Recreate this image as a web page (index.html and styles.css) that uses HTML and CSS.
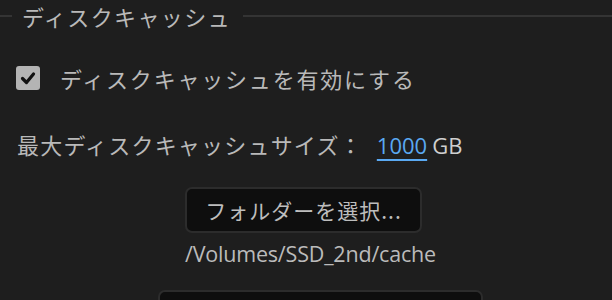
FILE: index.html
```html
<!DOCTYPE html>
<html lang="ja">
<head>
<meta charset="utf-8">
<link rel="stylesheet" href="styles.css">
</head>
<body>
<div class="panel">
  <div class="legend">
    <span class="rule rule-short"></span>
    <span class="legend-text">ディスクキャッシュ</span>
    <span class="rule rule-long"></span>
  </div>
  <label class="check-row">
    <span class="checkbox">
      <svg viewBox="0 0 24 24" width="24" height="24"><path d="M6.5 12.5 L10.5 16.5 L17.5 8" fill="none" stroke="#111" stroke-width="3.2" stroke-linecap="round" stroke-linejoin="round"/></svg>
    </span>
    <span class="check-label">ディスクキャッシュを有効にする</span>
  </label>
  <div class="size-row">
    <span class="size-label">最大ディスクキャッシュサイズ：</span>
    <span class="size-value">1000</span>
    <span class="size-unit">GB</span>
  </div>
  <div class="folder">
    <button class="btn">フォルダーを選択...</button>
    <div class="path">/Volumes/SSD_2nd/cache</div>
  </div>
  <div class="next">
    <button class="btn btn-wide"></button>
  </div>
</div>
</body>
</html>
```
FILE: styles.css
```css
html, body {
  margin: 0;
  padding: 0;
  background: #1e1e1e;
  overflow: hidden;
}
body {
  width: 612px;
  height: 300px;
  font-family: "Noto Sans CJK JP", "Noto Sans", sans-serif;
  color: #b9b9b9;
  font-size: 22px;
}
.panel {
  display: flex;
  flex-direction: column;
}
.legend {
  display: flex;
  align-items: center;
  height: 32px;
}
.rule {
  height: 2px;
  background: #343434;
}
.rule-short { width: 12px; }
.rule-long { flex: 1; }
.legend-text {
  padding: 0 12px 0 10px;
  letter-spacing: 1.4px;
  line-height: 30px;
}
.check-row {
  display: flex;
  align-items: center;
  gap: 20px;
  padding-left: 16px;
  margin-top: 34px;
  height: 24px;
}
.checkbox {
  width: 24px;
  height: 24px;
  border-radius: 3px;
  background: #b4b4b4;
  display: flex;
}
.check-label {
  letter-spacing: 1.8px;
  line-height: 24px;
}
.size-row {
  display: flex;
  align-items: baseline;
  padding-left: 17px;
  margin-top: 30px;
  height: 48px;
  line-height: 48px;
}
.size-label {
  letter-spacing: 1.2px;
}
.size-value {
  margin-left: 14px;
  color: #5aa9f2;
  text-decoration: underline;
  text-decoration-thickness: 2px;
  text-underline-offset: 5px;
  font-family: "Open Sans", sans-serif;
}
.size-unit {
  margin-left: 5px;
  color: #cfcfcf;
  font-family: "Open Sans", sans-serif;
}
.folder {
  display: flex;
  flex-direction: column;
  align-items: flex-start;
  padding-left: 185px;
  margin-top: 19px;
}
.btn {
  box-sizing: border-box;
  height: 46px;
  width: 237px;
  background: #0e0e0e;
  border: 2px solid #2c2c2c;
  border-radius: 7px;
  color: #bdbdbd;
  font-family: "Noto Sans CJK JP", sans-serif;
  font-size: 21px;
  letter-spacing: 1px;
  padding: 0;
}
.path {
  margin-top: 8px;
  line-height: 26px;
  font-family: "Open Sans", sans-serif;
  font-size: 21.5px;
  letter-spacing: -0.2px;
  color: #bbbbbb;
}
.next {
  padding-left: 158px;
  margin-top: 23px;
}
.btn-wide {
  width: 325px;
}
```
